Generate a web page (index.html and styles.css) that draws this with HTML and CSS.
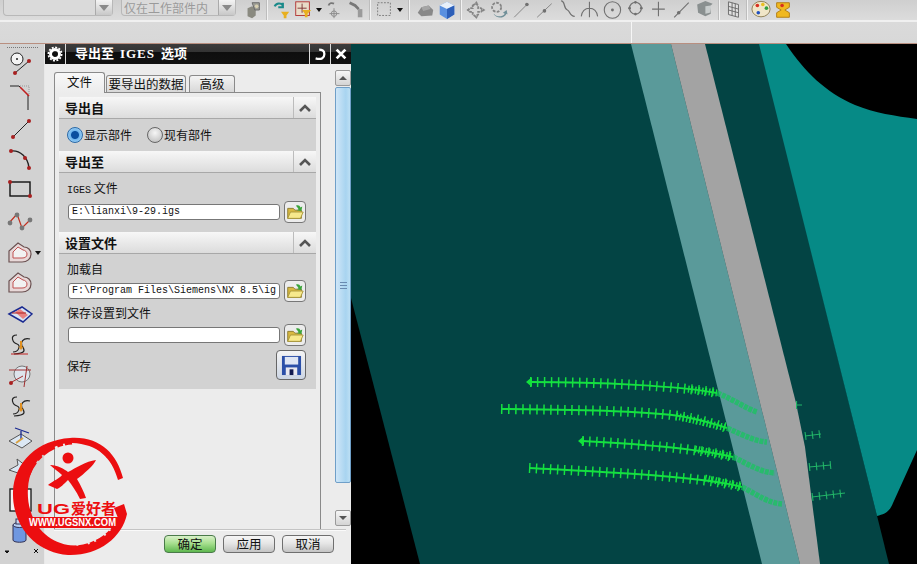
FILE: index.html
```html
<!DOCTYPE html>
<html lang="zh">
<head>
<meta charset="utf-8">
<title>导出至 IGES 选项</title>
<link rel="stylesheet" href="styles.css">
</head>
<body>
<svg class="defs" width="0" height="0" aria-hidden="true">
  <symbol id="folder" viewBox="0 0 22 22">
    <path d="M3 7h6l2 2h7v9H3z" fill="#d8b840" stroke="#8a7a30"/>
    <path d="M3 18l3-7h14l-3 7z" fill="#f7e98c" stroke="#a8963a"/>
    <path d="M12 4c3-1 4 0 5 2l2-1-1 5-5-1 2-1c-1-2-2-3-3-4z" fill="#3aa53a"/>
  </symbol>
  <symbol id="chev" viewBox="0 0 14 10">
    <path d="M2 8l5-5 5 5" fill="none" stroke="#555" stroke-width="2.6"/>
  </symbol>
  <symbol id="heart" viewBox="0 0 26 26">
    <path d="M2 22V11L11 3l6 4c4 0 7 3 7 7 0 5-4 8-9 8z" fill="#e8d8d8" stroke="#6a5050" stroke-width="1.200"/>
    <path d="M6 18v-6l5-5 5 3c2 0 4 2 4 4 0 3-2 4-5 4z" fill="#f2f2f2" stroke="#c05050"/>
  </symbol>
  <g id="tr-near">
    <path d="M530 382C600 382 680 386 717 393"/>
    <path d="M501 409C580 410 660 411 690 418C705 421 718 425 727 428"/>
    <path d="M582 441C640 444 700 449 733 457"/>
    <path d="M529 468C600 472 700 476 742 487"/>
  </g>
  <g id="tr-far">
    <path d="M796 405H802"/>
    <path d="M805 436L821 434"/>
    <path d="M809 467L831 465"/>
    <path d="M812 497L845 493"/>
  </g>
</svg>
<div class="app">
  <div class="toolbar">
    <div class="combo combo-a"><span class="combo-text"></span><span class="combo-btn"><i></i></span></div>
    <div class="combo combo-b"><span class="combo-text">仅在工作部件内</span><span class="combo-btn"><i></i></span></div>
    <svg class="ti ml6" viewBox="0 0 22 22"><path d="M5 9l5-2 4 2v8l-4 3-5-2z" fill="#8a8a80"/><path d="M10 3h8v8h-5z" fill="#a0a098" stroke="#666"/><circle cx="15" cy="7" r="2" fill="#d8d0b0"/></svg>
    <span class="sep"></span>
    <svg class="ti" viewBox="0 0 22 22"><path d="M4 7c2-4 7-4 9-1M13 3v5H8" fill="none" stroke="#1a8a8a" stroke-width="2.4"/><path d="M11 13h9l-3 4v3h-3v-3z" fill="#e8b020"/></svg>
    <svg class="ti" viewBox="0 0 22 22"><rect x="3" y="2" width="15" height="15" fill="#e8dcc8" stroke="#b03030"/><path d="M10 4v10M5 9h10" stroke="#7a3030"/><path d="M10 11h10l-4 4v4h-3v-4z" fill="#e8b020"/></svg>
    <span class="caret"></span>
    <svg class="ti" viewBox="0 0 22 22"><path d="M11 9v11M6 15h11" stroke="#888"/><circle cx="11" cy="15" r="3" fill="none" stroke="#888"/><path d="M5 6c1-3 4-3 6-2" fill="none" stroke="#777" stroke-width="2"/></svg>
    <svg class="ti" viewBox="0 0 22 22"><path d="M4 3l6 3 4 4" fill="none" stroke="#777" stroke-width="3"/><rect x="13" y="10" width="5" height="9" fill="#9a9a9a"/></svg>
    <span class="sep"></span>
    <svg class="ti" viewBox="0 0 22 22"><rect x="4" y="3" width="14" height="14" fill="none" stroke="#777" stroke-dasharray="2 1.5"/></svg>
    <span class="caret"></span>
    <span class="sep sep-wide"></span>
    <svg class="ti" viewBox="0 0 22 22"><path d="M3 14l4-6 8-2 5 5-1 6-12 1z" fill="#888"/><path d="M7 8l8-2 2 4-8 2z" fill="#a5a5a5"/></svg>
    <svg class="ti" viewBox="0 0 22 22"><path d="M3 6l8-4 8 4v10l-8 5-8-5z" fill="#5a90e0"/><path d="M3 6l8-4 8 4-8 4z" fill="#e8f0fa"/><path d="M11 10l8-4v10l-8 5z" fill="#2d5fb8"/></svg>
    <span class="sep"></span>
    <svg class="ti ti-w" viewBox="0 0 22 22" fill="#858585"><path d="M8 6l3-2 3 2v3h3l2 2-2 2h-3v3l-3 2-3-2v-3H5l-2-2 2-2h3z" fill="none" stroke="#858585" stroke-width="2" stroke-dasharray="3 1"/><path d="M12 1l2 3h-4zM12 21l2-3h-4zM1 11l3-2v4zM22 11l-3-2v4z"/></svg>
    <svg class="ti ti-w" viewBox="0 0 22 22"><circle cx="9" cy="8" r="5" fill="none" stroke="#858585" stroke-width="2" stroke-dasharray="3 1.5"/><path d="M6 15c3 4 9 4 12 0l-2-1 4-3 1 5-1-1c-3 5-10 6-14 1z" fill="#6f8f98"/></svg>
    <svg class="ti ti-w" viewBox="0 0 22 22"><path d="M3 19L16 6" stroke="#808080"/><circle cx="17" cy="5" r="2" fill="#707070"/></svg>
    <svg class="ti ti-w" viewBox="0 0 22 22"><path d="M3 19L19 4" stroke="#808080"/><circle cx="11" cy="12" r="2" fill="#707070"/></svg>
    <svg class="ti ti-w" viewBox="0 0 22 22"><path d="M4 1c5 0 2 8 7 10 3 1 2 7 8 7" fill="none" stroke="#707070" stroke-width="1.4"/></svg>
    <svg class="ti ti-w" viewBox="0 0 22 22"><path d="M11 2v17M2 18c1-7 5-9 9-9s8 2 9 9" fill="none" stroke="#707070" stroke-width="1.2"/></svg>
    <svg class="ti ti-w" viewBox="0 0 22 22"><circle cx="11" cy="11" r="9" fill="none" stroke="#707070" stroke-width="1.2"/><circle cx="11" cy="11" r="1.6" fill="#707070"/></svg>
    <svg class="ti ti-w" viewBox="0 0 22 22"><circle cx="11" cy="9" r="6.5" fill="none" stroke="#707070" stroke-width="1.2"/><circle cx="11" cy="2.5" r="1.5" fill="#707070"/><circle cx="4.5" cy="9" r="1.5" fill="#707070"/><circle cx="17.5" cy="9" r="1.5" fill="#707070"/><circle cx="11" cy="15.5" r="1.5" fill="#707070"/></svg>
    <svg class="ti ti-w" viewBox="0 0 22 22"><path d="M11 2v16M4 10h14" stroke="#707070" stroke-width="1.2"/></svg>
    <svg class="ti ti-w" viewBox="0 0 22 22"><path d="M3 19L19 3" stroke="#707070" stroke-width="1.2"/><circle cx="8" cy="14" r="2" fill="#707070"/></svg>
    <svg class="ti ti-w" viewBox="0 0 22 22"><path d="M3 5l9-4 8 3-3 3 1 8-6 3-8-4z" fill="#8a9090"/><path d="M12 7l6-1-1 8-5 1z" fill="#c8cdcd"/></svg>
    <span class="sep"></span>
    <svg class="ti" viewBox="0 0 22 22"><path d="M6 2l11 3v14L6 16z" fill="#e0e0e0" stroke="#666"/><path d="M6 7l11 3M6 11l11 3M10 3v14M13.500 4v14" stroke="#666"/></svg>
    <span class="sep"></span>
    <svg class="ti" viewBox="0 0 22 22"><ellipse cx="11" cy="10" rx="10" ry="8.500" fill="#f0e6c8" stroke="#8a7a50"/><circle cx="7" cy="6" r="2" fill="#d83020"/><circle cx="13" cy="5" r="2" fill="#e8c020"/><circle cx="17" cy="9" r="2" fill="#30a040"/><circle cx="8" cy="14" r="2" fill="#2050c0"/></svg>
    <svg class="ti" viewBox="0 0 22 22"><path d="M4 3h14v5l-5 3 5 3v5H4v-5l5-3-5-3z" fill="#f0b820" stroke="#b07a10"/><circle cx="10" cy="6" r="2" fill="#d83020"/></svg>
  </div>
  <div class="statusbar"><div class="status-cell status-a"></div><div class="status-cell"></div></div>
  <div class="main">
    <aside class="sidebar">
      <div class="grip"></div>
      <svg class="si si-first" viewBox="0 0 26 26"><circle cx="10" cy="9" r="6" fill="#f4f4f4" stroke="#222"/><circle cx="10" cy="9" r="1" fill="#222"/><path d="M8 23L22 11" stroke="#222"/><circle cx="8" cy="23" r="2" fill="#a82020"/><circle cx="22" cy="11" r="2" fill="#a82020"/></svg>
      <svg class="si" viewBox="0 0 26 26"><path d="M3 2h9l9 9v15" fill="none" stroke="#222"/><path d="M13 3l9 9" stroke="#c02020" stroke-width="1.6"/><path d="M13 2h9v9" fill="none" stroke="#999" stroke-dasharray="1 1"/></svg>
      <svg class="si" viewBox="0 0 26 26"><path d="M6 22L22 6" stroke="#222"/><circle cx="6" cy="22" r="2" fill="#a82020"/><circle cx="22" cy="6" r="2" fill="#a82020"/></svg>
      <svg class="si" viewBox="0 0 26 26"><path d="M4 5c9-1 17 6 18 17" fill="none" stroke="#222" stroke-width="1.400"/><circle cx="4" cy="5" r="2" fill="#a82020"/><circle cx="18" cy="12" r="2" fill="#a82020"/><circle cx="22" cy="22" r="2" fill="#a82020"/></svg>
      <svg class="si" viewBox="0 0 26 26"><rect x="3" y="5" width="20" height="14" fill="none" stroke="#111" stroke-width="1.4"/><circle cx="3" cy="5" r="2" fill="#a82020"/><circle cx="23" cy="19" r="2" fill="#a82020"/></svg>
      <svg class="si" viewBox="0 0 26 26"><path d="M2 15l8-9 5 14 8-8" fill="none" stroke="#c03020" stroke-width="1.2"/><circle cx="3" cy="15" r="2.400" fill="#777"/><circle cx="10" cy="7" r="2.400" fill="#777"/><circle cx="15" cy="20" r="2.400" fill="#777"/><circle cx="23" cy="12" r="2.400" fill="#777"/></svg>
      <div class="si-row">
        <svg class="si"><use href="#heart"/></svg>
        <span class="caret caret-side"></span>
      </div>
      <svg class="si"><use href="#heart"/></svg>
      <svg class="si" viewBox="0 0 26 26"><path d="M2 13L15 6l10 7-9 8z" fill="#d8e4f4" stroke="#1a2a90" stroke-width="1.500"/><path d="M8 11l5-3 8 6-5 4z" fill="#e88080"/><path d="M5 12l14 0" stroke="#b02020"/></svg>
      <svg class="si" viewBox="0 0 26 26"><path d="M10 3C2 3 6 11 10 12s2 8-4 8" fill="none" stroke="#222" stroke-width="1.200"/><path d="M23 7c-7-2-10 4-8 7s6 7-8 8" fill="none" stroke="#222" stroke-width="1.200"/><path d="M13 9v6l-2-1 3 4 3-4-2 1V9z" fill="#e09020"/><path d="M4 22h17" stroke="#c02020"/></svg>
      <svg class="si" viewBox="0 0 26 26"><circle cx="15" cy="11" r="8" fill="#dde4ec" stroke="#777"/><path d="M2 7h22M20 3l-3 21M16 13L3 20" stroke="#a03030"/><circle cx="4" cy="20" r="2" fill="#a82020"/></svg>
      <svg class="si" viewBox="0 0 26 26"><path d="M10 3C2 3 6 11 10 12s2 8-4 8" fill="none" stroke="#222" stroke-width="1.200"/><path d="M23 7c-7-2-10 4-8 7s6 7-8 8" fill="none" stroke="#222" stroke-width="1.200"/><path d="M13 9v6l-2-1 3 4 3-4-2 1V9z" fill="#e09020"/></svg>
      <svg class="si" viewBox="0 0 26 26"><path d="M2 16l12-7 11 7-10 7z" fill="#dce8f4" stroke="#555"/><path d="M8 3l14 5M14 6v9" stroke="#1a2a90" stroke-width="1.300"/><path d="M9 18l7-5" stroke="#d8a040" stroke-width="2"/></svg>
      <svg class="si" viewBox="0 0 26 26"><path d="M2 14l9-5-1-6 9 7 6-2-7 9-2 4-5-4z" fill="#dce8f4" stroke="#555"/></svg>
      <svg class="si" viewBox="0 0 26 26"><rect x="3" y="2" width="21" height="22" fill="#f4f4f4" stroke="#111" stroke-width="1.300"/><rect x="10" y="8" width="6" height="8" fill="none" stroke="#888"/></svg>
      <svg class="si" viewBox="0 0 26 26"><path d="M6 7h13v15c0 3-13 3-13 0z" fill="#6f97e0" stroke="#335"/><ellipse cx="12.500" cy="7" rx="6.500" ry="2.500" fill="#b8cef2" stroke="#335"/><rect x="9" y="1" width="6" height="5" fill="#c5d6f2" stroke="#335"/></svg>
      <svg class="si-tail" viewBox="0 0 44 6"><path d="M5 3l2 2 2-2zM34 1l4 4M38 1l-4 4" fill="#111" stroke="#111"/></svg>
    </aside>

    <section class="dialog">
      <header class="titlebar">
        <span class="tb-gear"><svg viewBox="0 0 16 16" width="16" height="16"><circle cx="8" cy="8" r="4.500" fill="none" stroke="#fff" stroke-width="3"/><circle cx="8" cy="8" r="6.600" fill="none" stroke="#fff" stroke-width="1.800" stroke-dasharray="2 1.450"/></svg></span>
        <span class="tb-title">导出至 <b class="latin">IGES</b> 选项</span>
        <span class="tb-btn"><svg viewBox="0 0 16 16" width="14" height="14"><path d="M3 13c7 2 10-1 10-5s-3-5-6-5" fill="none" stroke="#fff" stroke-width="2.600"/></svg></span>
        <span class="tb-btn"><svg viewBox="0 0 16 16" width="14" height="14"><path d="M3 3l10 10M13 3L3 13" stroke="#fff" stroke-width="3.200"/></svg></span>
      </header>
      <div class="dialog-body">
        <div class="content">
          <div class="tabs">
            <span class="tab tab-active">文件</span>
            <span class="tab tab-data">要导出的数据</span>
            <span class="tab tab-adv">高级</span>
          </div>
          <div class="panel">
            <div class="sec-head"><span>导出自</span><i class="sec-toggle"><svg width="14" height="10"><use href="#chev"/></svg></i></div>
            <div class="sec-body sec-radio">
              <label class="radio"><i class="dot dot-on"></i>显示部件</label>
              <label class="radio"><i class="dot"></i>现有部件</label>
            </div>
            <div class="sec-head"><span>导出至</span><i class="sec-toggle"><svg width="14" height="10"><use href="#chev"/></svg></i></div>
            <div class="sec-body sec-out">
              <div class="lbl mono-mix"><span class="latin">IGES</span> 文件</div>
              <div class="field-row">
                <div class="field latin">E:\lianxi\9-29.igs</div>
                <span class="fbtn"><svg width="20" height="20"><use href="#folder"/></svg></span>
              </div>
            </div>
            <div class="sec-head"><span>设置文件</span><i class="sec-toggle"><svg width="14" height="10"><use href="#chev"/></svg></i></div>
            <div class="sec-body sec-set">
              <div class="lbl">加载自</div>
              <div class="field-row">
                <div class="field latin">F:\Program Files\Siemens\NX 8.5\ig</div>
                <span class="fbtn"><svg width="20" height="20"><use href="#folder"/></svg></span>
              </div>
              <div class="lbl lbl-2">保存设置到文件</div>
              <div class="field-row">
                <div class="field"></div>
                <span class="fbtn"><svg width="20" height="20"><use href="#folder"/></svg></span>
              </div>
              <div class="save-row">
                <span>保存</span>
                <span class="sbtn"><svg viewBox="0 0 22 22" width="21" height="21"><path d="M1 1h20v20H1z" fill="#2b4fa8"/><rect x="4" y="2" width="14" height="8" fill="#dfe6f4"/><rect x="5" y="13" width="12" height="8" fill="#e8e8f0"/><rect x="9" y="15" width="4" height="6" fill="#111a50"/></svg></span>
              </div>
            </div>
          </div>
        </div>
        <div class="scrollbar">
          <span class="sb-arrow"><i class="tri-up"></i></span>
          <div class="sb-track"><div class="sb-thumb"><i class="sb-grip"></i></div></div>
          <span class="sb-arrow"><i class="tri-down"></i></span>
        </div>
      </div>
      <footer class="footer">
        <button class="btn btn-ok">确定</button>
        <button class="btn">应用</button>
        <button class="btn">取消</button>
      </footer>
    </section>

    <div class="viewport">
      <svg class="scene" viewBox="351 44 566 520" preserveAspectRatio="none">
        <rect x="351" y="44" width="566" height="520" fill="#000"/>
        <path d="M351 44H760L889 564H420L351 298z" fill="#034444"/>
        <path d="M759 44H786C805 72 825 92 855 105C875 113 895 116 917 119V450L893 503C889 513 884 514 877 516z" fill="#068a86"/>
        <path d="M631 44H671L800 564H762z" fill="#5a9a9a"/>
        <path d="M671 44H705L796 403L805 447L820 564H800z" fill="#a3a3a3"/>
        <use href="#tr-near" class="tr-line"/>
        <use href="#tr-near" class="tr-tick"/>
        <g class="tr-dense">
          <path d="M688 389L717 393"/>
          <path d="M676 416L727 428"/>
          <path d="M695 449L733 457"/>
          <path d="M705 478L742 487"/>
        </g>
        <g class="tr-dim">
          <path d="M717 393C735 400 745 408 757 412"/>
          <path d="M727 428C745 436 755 441 767 442"/>
          <path d="M733 457C750 465 760 472 775 473"/>
          <path d="M742 487C758 495 768 503 782 504"/>
        </g>
        <use href="#tr-far" class="tr-far-line"/>
        <use href="#tr-far" class="tr-far-tick"/>
        <path d="M526 382l6-5v10zM578 441l6-5v10z" fill="#12e03c"/>
      </svg>
    </div>
  </div>
  <svg class="logo" viewBox="0 0 120 124" width="120" height="124">
    <path fill-rule="evenodd" fill="#ec0e10" d="M60 4C90 2 107 20 113 44L108 46C102 24 88 10 62 9C38 9 20 28 18 54C16 80 30 106 58 111C80 115 100 104 108 84L104 74 114 70 117 80C112 104 88 122 58 121C26 119 2 92 3 58C4 28 28 6 60 4z"/>
    <path fill="none" stroke="#ec0e10" stroke-width="5" stroke-dasharray="14 3 6 2" d="M18 40C26 20 44 9 62 8"/>
    <path fill="none" stroke="#ec0e10" stroke-width="3" stroke-dasharray="9 2 4 3" d="M70 7C90 10 102 24 110 42"/>
    <path fill="none" stroke="#ec0e10" stroke-width="4" stroke-dasharray="10 2 5 2" d="M32 106C50 118 84 118 104 94"/>
    <circle cx="58" cy="24" r="5.500" fill="#ec0e10"/>
    <path fill="#ec0e10" d="M40 31C48 31 54 35 58 38C66 34 76 27 86 26C84 31 74 40 67 45C71 52 74 58 76 64L70 65C66 57 62 51 58 46C54 50 50 54 47 55L38 51C43 47 50 44 52 41C48 37 43 34 40 31z"/>
    <text class="logo-ug" x="27" y="80" textLength="33" lengthAdjust="spacingAndGlyphs">UG</text>
    <text class="logo-cn" x="61" y="80">爱好者</text>
    <rect x="16" y="83" width="93" height="11" rx="1" fill="#ec0e10"/>
    <text class="logo-url" x="19" y="92" textLength="87" lengthAdjust="spacingAndGlyphs">WWW.UGSNX.COM</text>
  </svg>
</div>
</body>
</html>
```
FILE: styles.css
```css
* { box-sizing: border-box; }
html, body { margin: 0; height: 100%; overflow: hidden; }
body { font-family: "Noto Sans CJK SC", "Liberation Sans", sans-serif; font-size: 12px; color: #111; }
.defs { position: absolute; }
i { font-style: normal; display: block; }
.latin { font-family: "Liberation Mono", "Noto Sans CJK SC", monospace; }

.app { position: relative; width: 917px; height: 564px; display: flex; flex-direction: column; background: #d6d6d6; overflow: hidden; }

/* top toolbar */
.toolbar { height: 22px; flex: none; display: flex; align-items: flex-start; padding-left: 3px; background: linear-gradient(#cfcfcf, #dcdcdc); border-bottom: 2px solid #f0f0f0; }
.combo { height: 16px; display: flex; justify-content: space-between; align-items: stretch; border: 1px solid #b8b8b8; border-top: 0; border-radius: 0 0 4px 4px; background: #dadada; }
.combo-a { width: 110px; margin-right: 8px; }
.combo-b { width: 115px; }
.combo-text { color: #9a9a9a; font-size: 12px; line-height: 15px; padding-left: 2px; }
.combo-btn { width: 17px; background: linear-gradient(#f4f4f4, #c8c8c8); border-left: 1px solid #aaa; display: flex; align-items: center; justify-content: center; }
.combo-btn i { border: 5px solid transparent; border-top: 6px solid #8a8a8a; border-bottom: 0; }
.ti { width: 22px; height: 20px; flex: none; }
.ti-w { width: 22.900px; }
.ml6 { margin-left: 6px; }
.sep { width: 2px; height: 20px; flex: none; margin: 0 2px; background: #f2f2f2; border-left: 1px solid #bdbdbd; }
.sep-wide { margin-left: 4px; margin-right: 4px; }
.caret { flex: none; width: 9px; height: 20px; display: flex; align-items: center; justify-content: center; }
.caret::before { content: ""; border: 3.500px solid transparent; border-top: 4px solid #111; border-bottom: 0; }

.statusbar { height: 22px; flex: none; display: flex; background: linear-gradient(#dadada, #d8d8d8); border-bottom: 1px solid #b98f80; }
.status-cell { flex: 1; }
.status-a { flex: none; width: 632px; border-right: 1px solid #f6f6f6; }

.main { flex: 1; min-height: 0; display: flex; }

/* left icon column */
.sidebar { width: 45px; flex: none; display: flex; flex-direction: column; align-items: flex-start; padding: 3px 0 0 7px; background: #d2d2d2; border-right: 1px solid #e8e8e8; overflow: hidden; }
.grip { width: 31px; height: 3px; flex: none; border-top: 1px dotted #777; }
.si { width: 26px; height: 26px; flex: none; margin-bottom: 5px; }
.si-first { margin-bottom: 8px; }
.si-row { display: flex; align-items: center; height: 31px; flex: none; margin-top: -2px; margin-bottom: 2px; }
.si-row .si { margin: 0; }
.caret-side { height: 26px; }
.si-tail { width: 44px; height: 6px; flex: none; margin-left: -7px; margin-top: -1px; }

/* dialog */
.dialog { width: 306px; flex: none; display: flex; flex-direction: column; background: #ececec; }
.titlebar { height: 20px; flex: none; display: flex; align-items: stretch; background: linear-gradient(#3c3c3c 0, #333 40%, #0e0e0e 42%, #111 100%); color: #fff; }
.tb-gear { width: 21px; display: flex; align-items: center; justify-content: center; border-right: 1px solid #ddd; }
.tb-title { flex: 1; font-size: 13px; font-weight: 700; line-height: 18px; padding-left: 9px; white-space: pre; }
.tb-title .latin { font-size: 13px; margin: 0 3px; font-family: "Liberation Serif", serif; letter-spacing: 1px; }
.tb-btn { width: 21px; display: flex; align-items: center; justify-content: center; border-left: 1px solid #ddd; }

.dialog-body { flex: 1; min-height: 0; display: flex; padding-top: 5px; }
.content { width: 276px; margin-left: 9px; display: flex; flex-direction: column; }
.tabs { height: 23px; flex: none; display: flex; align-items: flex-end; gap: 1px; }
.tab { height: 17px; line-height: 16px; text-align: center; background: linear-gradient(#f4f4f4, #d8d8d8); border: 1px solid #8a8a8a; border-bottom: 0; border-radius: 3px 3px 0 0; font-size: 12.500px; }
.tab-active { width: 51px; height: 21px; background: linear-gradient(#f8f8f8, #ececec); line-height: 18px; position: relative; z-index: 1; margin-bottom: -1px; }
.tab-data { width: 80px; }
.tab-adv { width: 46px; margin-left: 2px; }
.panel { flex: 1; width: 267px; padding: 4px 4px 0; border: 1px solid #8a8a8a; border-bottom: 0; }
.sec-head { height: 22px; display: flex; justify-content: space-between; background: linear-gradient(#f7f7f7, #dcdcdc); font-size: 13px; font-weight: 700; line-height: 22px; padding-left: 6px; border-bottom: 1px solid #a8a8a8; }
.sec-toggle { width: 23px; display: flex; align-items: center; justify-content: center; border-left: 1px solid #bcbcbc; }
.sec-body { background: #d2d2d2; }
.sec-radio { height: 32px; display: flex; align-items: center; gap: 15px; padding-left: 8px; }
.sec-out { height: 59px; padding: 7px 10px 0 8px; }
.sec-out .field-row { margin-top: 5px; }
.sec-set { height: 135px; padding: 7px 10px 0 8px; }
.radio { display: flex; align-items: center; gap: 1px; line-height: 16px; }
.dot { width: 16px; height: 16px; border-radius: 50%; background: radial-gradient(circle at 50% 35%, #f6f6f6, #b8b8b8); border: 1px solid #666; }
.dot-on { background: radial-gradient(circle, #0a4fa0 0 3.500px, #6fb6ee 4.500px, #bfe0f8 100%); border-color: #2a6aa8; }
.lbl { height: 16px; line-height: 16px; }
.mono-mix .latin { font-size: 10px; }
.lbl-2 { margin-top: 3px; }
.field-row { display: flex; align-items: center; justify-content: space-between; height: 22px; margin-top: 3px; }
.field { width: 212px; height: 16px; margin-left: 1px; border: 1px solid #777; border-radius: 3px; background: #fff; font-size: 10px; line-height: 14px; padding-left: 3px; overflow: hidden; white-space: nowrap; }
.fbtn { width: 22px; height: 22px; display: flex; align-items: center; justify-content: center; border: 1px solid #777; border-radius: 4px; background: #ececec; }
.save-row { height: 30px; margin-top: 4px; display: flex; align-items: center; justify-content: space-between; }
.sbtn { width: 30px; height: 30px; display: flex; align-items: center; justify-content: center; border: 1px solid #666; border-radius: 4px; background: linear-gradient(#f4f4f4, #cdd6e4); }

.scrollbar { width: 16px; margin-left: 8px; margin-top: 1px; height: 456px; display: flex; flex-direction: column; gap: 1px; }
.sb-arrow { height: 16px; flex: none; display: flex; align-items: center; justify-content: center; border: 1px solid #9a9a9a; border-radius: 2px; background: linear-gradient(#f6f6f6, #d4d4d4); }
.tri-up { border: 4px solid transparent; border-bottom: 4px solid #555; border-top: 0; }
.tri-down { border: 4px solid transparent; border-top: 4px solid #555; border-bottom: 0; }
.sb-track { flex: 1; min-height: 0; }
.sb-thumb { height: 396px; background: linear-gradient(90deg, #cfe6f8, #a8d4f0 70%, #bcdff4); border: 1px solid #6f9fc8; border-radius: 2px; display: flex; align-items: center; justify-content: center; }
.sb-grip { width: 7px; height: 7px; border-top: 1px solid #6a8ab0; border-bottom: 1px solid #6a8ab0; background: linear-gradient(transparent 2px, #6a8ab0 2px, #6a8ab0 3px, transparent 3px); }

.footer { flex: none; height: 35px; margin-left: 9px; margin-right: 5px; display: flex; justify-content: flex-end; align-items: flex-start; gap: 7px; padding: 5px 12px 0 0; border-top: 1px solid #c4c4c4; box-shadow: inset 0 1px 0 #fafafa; }
.btn { width: 52px; height: 18px; padding: 0; border: 1px solid #6f6f6f; border-radius: 4px; background: linear-gradient(#f6f6f6, #e6e6e6 45%, #c4c4c4); font: 12.500px/16px "Noto Sans CJK SC", sans-serif; color: #111; }
.btn-ok { background: linear-gradient(#d8f0c8, #a8e090 45%, #5fb84f); border-color: #4a7a4a; }

/* graphics window */
.viewport { flex: 1; min-width: 0; background: #000; }
.scene { display: block; width: 100%; height: 100%; }
.tr-line { fill: none; stroke: #14e040; stroke-width: 2px; }
.tr-tick { fill: none; stroke: #14e040; stroke-width: 10px; stroke-dasharray: 1.500 5.500; }
.tr-dense path { fill: none; stroke: #14e040; stroke-width: 7px; stroke-dasharray: 1.500 2; }
.tr-dim path { fill: none; stroke: #12c85a; stroke-width: 5.500px; stroke-dasharray: 4 1; opacity: .7; }
.tr-far-line { fill: none; stroke: #22b568; stroke-width: 1px; }
.tr-far-tick { fill: none; stroke: #22b568; stroke-width: 8px; stroke-dasharray: 1.100 5.900; }

/* watermark overlay */
.logo { position: absolute; left: 10px; top: 434px; }
.logo-ug { font: 700 14px "Liberation Sans", sans-serif; fill: #ec0e10; }
.logo-cn { font: 700 15px "Noto Sans CJK SC", sans-serif; fill: #ec0e10; }
.logo-url { font: 700 10px "Liberation Sans", sans-serif; fill: #fff; }
```
